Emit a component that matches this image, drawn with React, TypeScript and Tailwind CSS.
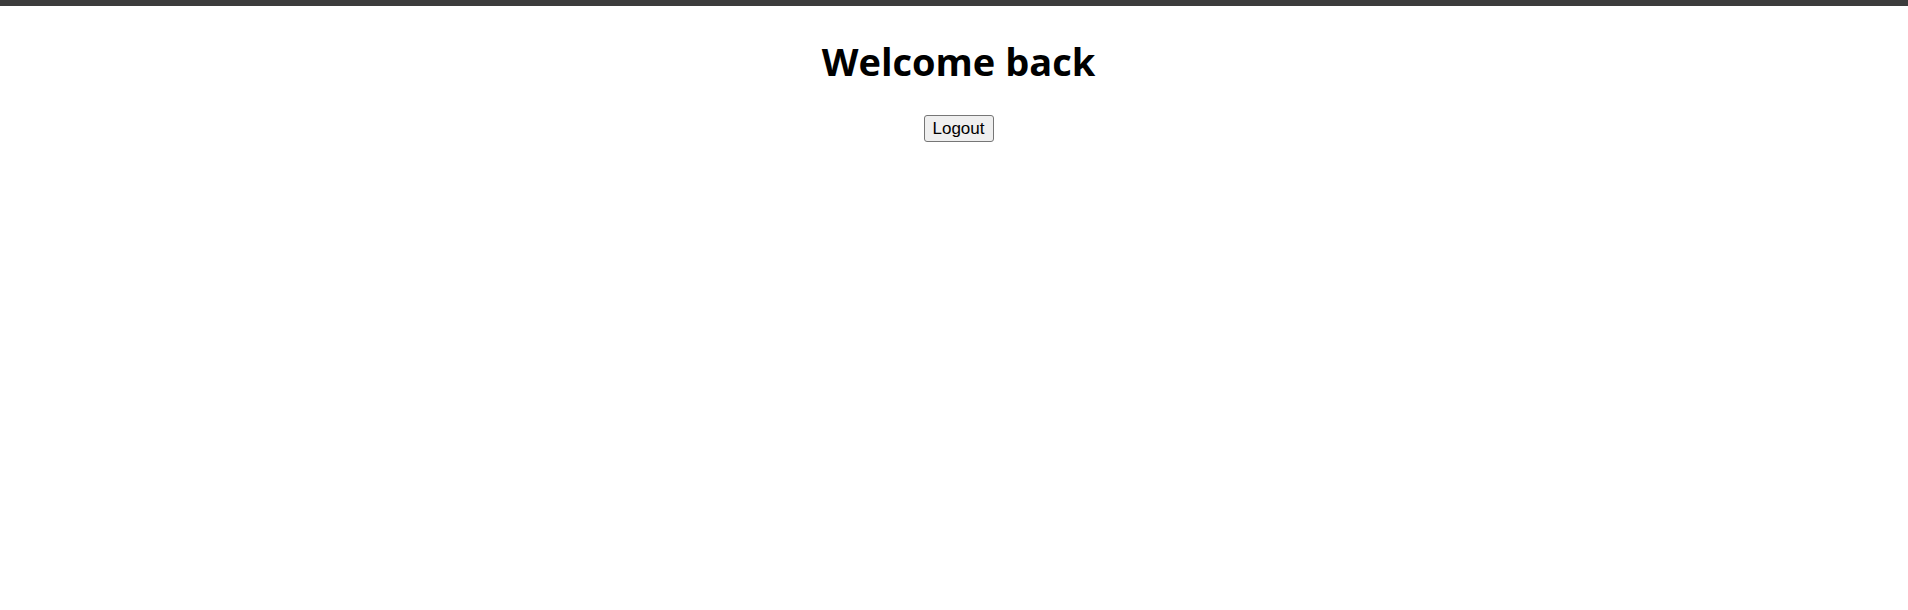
export default function App() {
  return (
    <div className="min-h-[610px] w-full bg-white">
      <div className="h-[6px] w-full bg-[#3c3c3c]" />
      <div className="flex flex-col items-center pl-[9px] pt-[29px]">
        <h1 className="text-[38px] leading-[52px] font-bold text-black [font-family:'Open_Sans',sans-serif]">
          Welcome back
        </h1>
        <button className="mt-[28px] h-[27px] px-[8px] rounded-[3px] border border-[#767676] bg-[#efefef] text-[17px] text-black [font-family:'Liberation_Sans',Arial,sans-serif]">
          Logout
        </button>
      </div>
    </div>
  );
}
